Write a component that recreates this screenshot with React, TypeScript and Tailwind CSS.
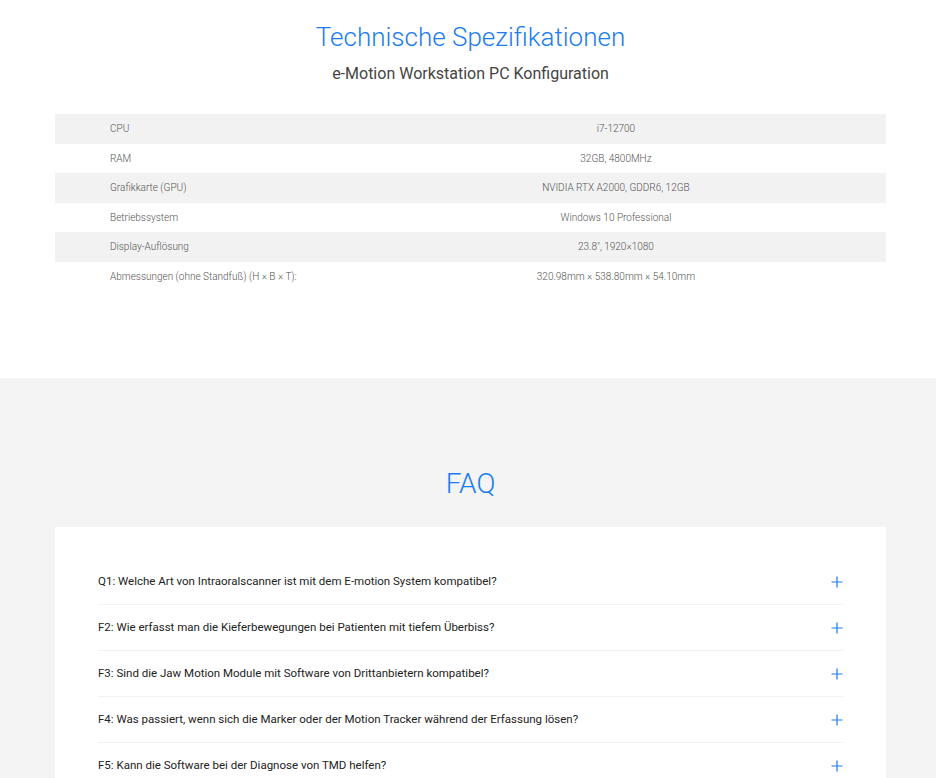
const specs = [
  { label: 'CPU', value: 'i7-12700' },
  { label: 'RAM', value: '32GB, 4800MHz' },
  { label: 'Grafikkarte (GPU)', value: 'NVIDIA RTX A2000, GDDR6, 12GB' },
  { label: 'Betriebssystem', value: 'Windows 10 Professional' },
  { label: 'Display-Auflösung', value: '23.8", 1920×1080' },
  { label: 'Abmessungen (ohne Standfuß) (H × B × T):', value: '320.98mm × 538.80mm × 54.10mm' },
]

const faqs = [
  'Q1: Welche Art von Intraoralscanner ist mit dem E-motion System kompatibel?',
  'F2: Wie erfasst man die Kieferbewegungen bei Patienten mit tiefem Überbiss?',
  'F3: Sind die Jaw Motion Module mit Software von Drittanbietern kompatibel?',
  'F4: Was passiert, wenn sich die Marker oder der Motion Tracker während der Erfassung lösen?',
  'F5: Kann die Software bei der Diagnose von TMD helfen?',
]

function Plus() {
  return (
    <svg width="12" height="12" viewBox="0 0 12 12" className="shrink-0">
      <path d="M6 0.5V11.5M0.5 6H11.5" stroke="#1a7cf0" strokeWidth="1.2" fill="none" />
    </svg>
  )
}

export default function App() {
  return (
    <div className="w-[936px] min-h-[778px] bg-white font-['Roboto','Liberation_Sans',sans-serif]">
      <section className="pt-[20px] pb-[87px] pl-[55px] pr-[50px]">
        <h1 className="text-center text-[26px] leading-[34px] font-light text-[#1a7cf0]">
          Technische Spezifikationen
        </h1>
        <p className="text-center text-[16px] leading-[22px] text-[#444] mt-[9px]">
          e-Motion Workstation PC Konfiguration
        </p>

        <div className="mt-[29px]">
          {specs.map((s, i) => (
            <div
              key={s.label}
              className={`flex items-center h-[29.5px] text-[10px] font-light text-[#555] ${
                i % 2 === 0 ? 'bg-[#f2f2f2]' : 'bg-white'
              }`}
            >
              <div className="w-[35%] pl-[55px]">{s.label}</div>
              <div className="flex-1 text-center">{s.value}</div>
            </div>
          ))}
        </div>
      </section>

      <section className="bg-[#f3f4f3] pt-[88px] pl-[55px] pr-[50px]">
        <h2 className="text-center text-[28px] leading-[36px] font-light text-[#1a7cf0]">
          FAQ
        </h2>
        <div className="mt-[25px] bg-white px-[43px] pt-[32px]">
          {faqs.map((q) => (
            <div
              key={q}
              className="flex items-center justify-between h-[46px] border-b border-[#f2f2f2] text-[11.5px] text-[#222]"
            >
              <span>{q}</span>
              <Plus />
            </div>
          ))}
        </div>
      </section>
    </div>
  )
}
